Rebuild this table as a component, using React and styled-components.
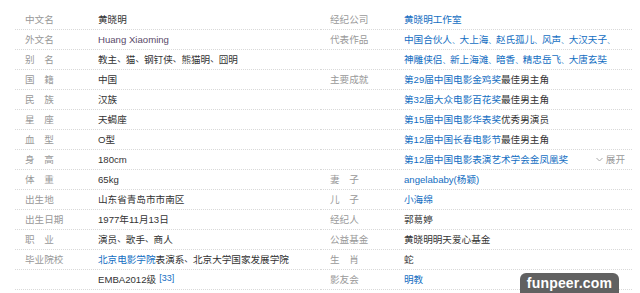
import React from "react";
import styled, { createGlobalStyle } from "styled-components";

const Global = createGlobalStyle`
  html, body { margin: 0; padding: 0; background: #fff; }
  body { font-family: "Liberation Sans", "Noto Sans CJK SC", sans-serif; }
`;

const Page = styled.div`
  position: relative;
  width: 640px;
  height: 293px;
  overflow: hidden;
  background: #fff;
`;

const Info = styled.div`
  display: grid;
  grid-template-columns: 303px 312px;
  column-gap: 2px;
  padding: 10px 8px 0 15px;
`;

const Column = styled.div`
  display: flex;
  flex-direction: column;
`;

const Line = styled.div`
  display: flex;
  align-items: center;
  height: 19px;
  border-bottom: 1px dotted #d9d9d9;
  font-size: 9.6px;
  line-height: 19px;
  white-space: nowrap;
`;

const Label = styled.span`
  flex: 0 0 auto;
  width: ${(p) => p.$w}px;
  padding-left: 10px;
  box-sizing: border-box;
  color: #999;
  white-space: pre;
`;

const Value = styled.span`
  flex: 1 1 auto;
  color: #333;
  display: flex;
  align-items: center;
`;

const Link = styled.span`
  color: #136ec2;
`;

const Sep = styled.span`
  font-size: ${(p) => 9.6 - (p.$tight || 1)}px;
`;

const Latin = styled.span`
  color: ${(p) => p.$color || "#333"};
`;

const Sup = styled.sup`
  color: #136ec2;
  font-size: 9px;
  line-height: 0;
  margin-left: 3px;
  position: relative;
  top: -2px;
`;

const Expand = styled.span`
  margin-left: auto;
  margin-right: 7px;
  display: flex;
  align-items: center;
  gap: 3px;
  color: #999;
`;

const Watermark = styled.div`
  position: absolute;
  left: 520px;
  bottom: 0;
  width: 99px;
  height: 20px;
  border-radius: 6px 6px 0 0;
  background: #616161;
  color: #fff;
  font-family: "Liberation Sans", sans-serif;
  font-weight: bold;
  font-size: 14px;
  line-height: 20px;
  text-align: center;
  letter-spacing: 0.2px;
`;

const Chevron = () => (
  <svg width="7" height="5" viewBox="0 0 7 5">
    <path d="M0.5 1 L3.5 4 L6.5 1" fill="none" stroke="#aaa" strokeWidth="1" />
  </svg>
);

const SP = "\u3000";

const list = (items, tight, trailing) =>
  items.map((t, i) => (
    <React.Fragment key={i}>
      {t}
      {(i < items.length - 1 || trailing) && <Sep $tight={tight}>、</Sep>}
    </React.Fragment>
  ));

const left = [
  ["中文名", <>黄晓明</>],
  ["外文名", <Latin $color="#5a4a6a">Huang Xiaoming</Latin>],
  [`别${SP}名`, <>{list(["教主", "猫", "钢钉侠", "熊猫明", "囧明"], 1)}</>],
  [`国${SP}籍`, <>中国</>],
  [`民${SP}族`, <>汉族</>],
  [`星${SP}座`, <>天蝎座</>],
  [`血${SP}型`, <>O型</>],
  [`身${SP}高`, <>180cm</>],
  [`体${SP}重`, <>65kg</>],
  ["出生地", <>山东省青岛市市南区</>],
  ["出生日期", <>1977年11月13日</>],
  [`职${SP}业`, <>{list(["演员", "歌手", "商人"], 1)}</>],
  ["毕业院校", <><Link>北京电影学院</Link>表演系<Sep $tight={1}>、</Sep>北京大学国家发展学院</>],
  ["", <>EMBA2012级<Sup>[33]</Sup></>],
];

const right = [
  ["经纪公司", <Link>黄晓明工作室</Link>],
  ["代表作品", <Link>{list(["中国合伙人", "大上海", "赵氏孤儿", "风声", "大汉天子"], 2, true)}</Link>],
  ["", <Link>{list(["神雕侠侣", "新上海滩", "暗香", "精忠岳飞", "大唐玄奘"], 2)}</Link>],
  ["主要成就", <><Link>第29届中国电影金鸡奖</Link>最佳男主角</>],
  ["", <><Link>第32届大众电影百花奖</Link>最佳男主角</>],
  ["", <><Link>第15届中国电影华表奖</Link>优秀男演员</>],
  ["", <><Link>第12届中国长春电影节</Link>最佳男主角</>],
  ["", <><Link>第12届中国电影表演艺术学会金凤凰奖</Link><Expand><Chevron />展开</Expand></>],
  [`妻${SP}子`, <Link>angelababy(杨颖)</Link>],
  [`儿${SP}子`, <Link>小海绵</Link>],
  ["经纪人", <>郭䓪婷</>],
  ["公益基金", <>黄晓明明天爱心基金</>],
  [`生${SP}肖`, <>蛇</>],
  ["影友会", <Link>明教</Link>],
];

export default function App() {
  return (
    <>
      <Global />
      <Page>
        <Info>
          <Column>
            {left.map(([k, v], i) => (
              <Line key={i}>
                <Label $w={83}>{k}</Label>
                <Value>{v}</Value>
              </Line>
            ))}
          </Column>
          <Column>
            {right.map(([k, v], i) => (
              <Line key={i}>
                <Label $w={84}>{k}</Label>
                <Value>{v}</Value>
              </Line>
            ))}
          </Column>
        </Info>
        <Watermark>funpeer.com</Watermark>
      </Page>
    </>
  );
}
